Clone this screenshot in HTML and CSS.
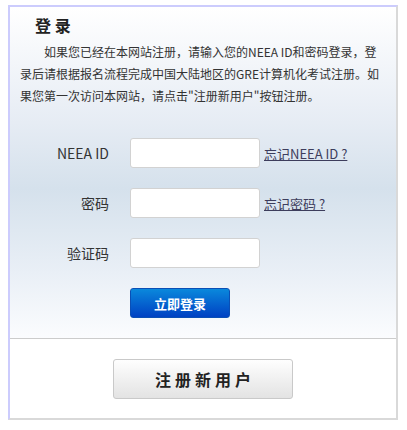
FILE: index.html
```html
<!DOCTYPE html>
<html lang="zh-CN">
<head>
  <meta charset="UTF-8" />
  <meta name="viewport" content="width=device-width, initial-scale=1.0" />
  <title>登录</title>
  <link rel="stylesheet" href="styles.css">
</head>
<body>
  <div class="login-box">
    <!-- 登录区 -->
    <div class="login">
      <div class="title">登 录</div>
      <p class="intro">如果您已经在本网站注册，请输入您的NEEA ID和密码登录，登录后请根据报名流程完成中国大陆地区的GRE计算机化考试注册。如果您第一次访问本网站，请点击"注册新用户"按钮注册。</p>

      <form class="form" onsubmit="return false;">
        <label class="label" for="uid">NEEA ID</label>
        <input class="input" id="uid" type="text" />
        <a class="link" href="#">忘记NEEA ID ?</a>

        <label class="label" for="pwd">密码</label>
        <input class="input" id="pwd" type="password" />
        <a class="link" href="#">忘记密码 ?</a>

        <label class="label" for="code">验证码</label>
        <input class="input" id="code" type="text" />
        <span></span>

        <span></span>
        <button class="btn-login" type="submit">立即登录</button>
        <span></span>
      </form>
    </div>

    <!-- 注册区 -->
    <div class="register">
      <button class="btn-register" type="button">注册新用户</button>
    </div>
  </div>
</body>
</html>
```

FILE: styles.css
```css
body {
  margin: 5px 8px 0;
  font-family: "Noto Sans CJK SC", "Liberation Sans", sans-serif;
  color: #333;
  background: #fff;
}

.login-box {
  width: 390px;
  box-sizing: border-box;
  border: 2px solid #d9d9d9;
  border-top-color: #ccccfd;
  border-left-color: #ccccfd;
}

.login {
  padding: 6px 15px 20px 10px;
  background: linear-gradient(#ffffff 0%, #e6ecf4 35%, #d5e1ec 55%, #e9eff6 80%, #fbfcfe 100%);
  border-bottom: 1px solid #cccccc;
}

.title {
  padding-left: 15px;
  font-size: 16px;
  line-height: 24px;
  font-weight: bold;
  color: #222;
}

.intro {
  margin: 4px 0 0;
  font-size: 12px;
  line-height: 22px;
  text-indent: 2em;
  color: #333;
}

.form {
  display: grid;
  grid-template-columns: 110px 130px auto;
  row-gap: 20px;
  align-items: center;
  margin-top: 31px;
}

.label {
  padding-right: 21px;
  text-align: right;
  font-size: 14px;
  color: #333;
}

.input {
  width: 130px;
  height: 30px;
  box-sizing: border-box;
  border: 1px solid #d2d2d2;
  border-radius: 3px;
  background: #fff;
  font-size: 13px;
}

.link {
  margin-left: 4px;
  font-size: 13px;
  color: #3d3d5c;
  text-decoration: underline;
}

.btn-login {
  width: 100px;
  height: 30px;
  padding: 0;
  border: 1px solid #0a4fb5;
  border-radius: 3px;
  background: linear-gradient(#0a88dc, #0041c3);
  color: #fff;
  font-family: inherit;
  font-size: 13px;
  font-weight: bold;
  cursor: pointer;
}

.register {
  padding: 20px 0 19px;
  text-align: center;
  background: #fff;
}

.btn-register {
  width: 180px;
  height: 40px;
  padding: 0 0 0 4px;
  border: 1px solid #c9c9c9;
  border-radius: 3px;
  background: linear-gradient(#fefefe, #e3e3e3);
  color: #222;
  font-family: inherit;
  font-size: 16px;
  font-weight: bold;
  letter-spacing: 4px;
  cursor: pointer;
}
```
